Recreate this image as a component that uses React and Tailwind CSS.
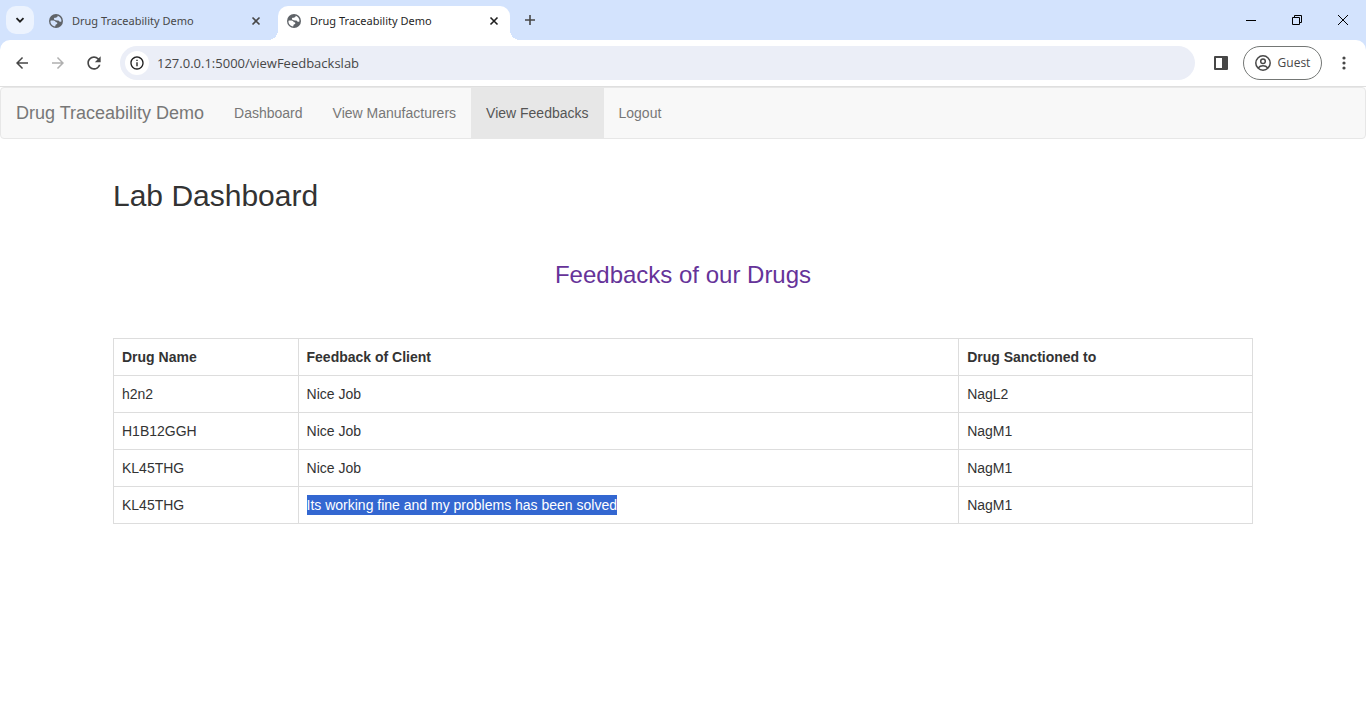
import { MdArrowBack, MdArrowForward, MdRefresh, MdInfoOutline } from "react-icons/md";

function Globe({ land }) {
  return (
    <svg viewBox="0 0 14 14" className="size-3.5 shrink-0" aria-hidden="true">
      <circle cx="7" cy="7" r="7" fill="#5f6368" />
      <path d="M1.500 6.700C3 6.500 5 6.600 6 7.100C6.600 7.400 6.300 8.100 7 8.200C7.900 8.300 8.500 8.600 8.300 9.400C8 10.200 7 10 6.600 10.800C6.400 11.400 6.500 12 6.100 12.500C3.200 12.100 1.100 9.500 1.500 6.700Z" fill={land} />
      <path d="M8.600 1.700C11 2.400 12.500 4.400 12.500 7.200C11.800 7.900 10.900 7.900 10.200 7.200C9.700 6.600 9 6.700 8 6.500C6.600 6.300 4.800 5.900 4.900 4.700C5 3.700 6.300 3.900 7.200 3.600C8.200 3.300 8.700 2.600 8.600 1.700Z" fill={land} />
    </svg>
  );
}

function Tab({ active }) {
  return (
    <div
      className={
        active
          ? "relative flex h-[34px] w-[232px] items-center rounded-t-[10px] bg-white pr-2 pb-1 pl-[9px] text-[#1f1f1f]"
          : "flex h-[34px] w-[238px] items-center pr-3.5 pb-1 pl-[9px] text-[#474747]"
      }
    >
      {active && (
        <>
          <span className="absolute bottom-0 -left-2.5 size-2.5 bg-[radial-gradient(circle_at_0_0,#d3e3fd_10px,#fff_10px)]" />
          <span className="absolute -right-2.5 bottom-0 size-2.5 bg-[radial-gradient(circle_at_100%_0,#d3e3fd_10px,#fff_10px)]" />
        </>
      )}
      <Globe land={active ? "#ffffff" : "#d3e3fd"} />
      <span className="ml-[9px] flex-1 font-['Noto_Sans',sans-serif] text-[11px] leading-4 whitespace-nowrap">Drug Traceability Demo</span>
      <button aria-label="Close tab" className="flex size-4 items-center justify-center">
        <svg viewBox="0 0 10 10" className="size-2.5" fill="none" stroke="currentColor" strokeWidth="1.600">
          <path d="M1.500 1.500l7 7M8.500 1.500l-7 7" />
        </svg>
      </button>
    </div>
  );
}

function BrowserChrome() {
  return (
    <header className="bg-[#d3e3fd] font-['Open_Sans',sans-serif]">
      <div className="flex h-10 items-end pl-1.5">
        <button aria-label="Search tabs" className="mb-1.5 flex size-7 items-center justify-center rounded-[10px] bg-[#ecf3fe]">
          <svg viewBox="0 0 10 10" className="size-2.5" fill="none" stroke="#1f1f1f" strokeWidth="1.800">
            <path d="M1.500 3.200L5 6.700L8.500 3.200" />
          </svg>
        </button>
        <div className="flex pl-1.5">
          <Tab />
          <Tab active />
        </div>
        <button aria-label="New tab" className="mb-3 ml-3 flex size-4 items-center justify-center">
          <svg viewBox="0 0 12 12" className="size-3" fill="none" stroke="#474747" strokeWidth="1.600">
            <path d="M6 1v10M1 6h10" />
          </svg>
        </button>
        <div className="mb-3.5 ml-auto flex">
          <button aria-label="Minimize" className="flex w-[46px] justify-center">
            <svg viewBox="0 0 12 12" className="size-3" fill="none" stroke="#000"><path d="M1 6.500h10" /></svg>
          </button>
          <button aria-label="Restore" className="flex w-[46px] justify-center">
            <svg viewBox="0 0 12 12" className="size-3" fill="none" stroke="#000"><path d="M1.500 3.500h7v7h-7zM3.500 3.500v-2h7v7h-2" /></svg>
          </button>
          <button aria-label="Close" className="flex w-[46px] justify-center">
            <svg viewBox="0 0 12 12" className="size-3" fill="none" stroke="#000"><path d="M1 1l10 10M11 1L1 11" /></svg>
          </button>
        </div>
      </div>
      <div className="flex h-[47px] items-center rounded-t-[10px] border-b border-[#dfdfdf] bg-white pr-3.5 pl-3">
        <button aria-label="Back"><MdArrowBack className="size-5 p-px text-[#474747]" /></button>
        <button aria-label="Forward" className="ml-4"><MdArrowForward className="size-5 p-px text-[#b0b0b0]" /></button>
        <button aria-label="Reload" className="ml-4"><MdRefresh className="size-5 text-[#474747]" /></button>
        <div className="ml-4 flex h-[34px] flex-1 items-center rounded-full bg-[#ebeef7] pl-[5px]">
          <button aria-label="Site information" className="flex size-6 items-center justify-center rounded-full bg-white">
            <MdInfoOutline className="size-4 text-[#1f1f1f]" />
          </button>
          <input
            aria-label="Address"
            defaultValue="127.0.0.1:5000/viewFeedbackslab"
            className="ml-2 flex-1 bg-transparent text-[13px] leading-5 text-[#474747] outline-none"
          />
        </div>
        <button aria-label="Side panel" className="ml-[18px]">
          <svg viewBox="0 0 16 16" className="size-4" aria-hidden="true">
            <path fill="#474747" fillRule="evenodd" d="M2 1h12a1 1 0 0 1 1 1v12a1 1 0 0 1-1 1H2a1 1 0 0 1-1-1V2a1 1 0 0 1 1-1zM3 3v10h6V3z" />
          </svg>
        </button>
        <button className="ml-3.5 flex h-[34px] w-[79px] items-center justify-center rounded-full border border-[#747775] text-xs text-[#474747]">
          <svg viewBox="0 0 16 16" className="mr-[7px] size-4" fill="none" stroke="#474747" strokeWidth="1.500" aria-hidden="true">
            <circle cx="8" cy="8" r="7.200" />
            <circle cx="8" cy="6.300" r="2.300" />
            <path d="M3.200 13c1.200-1.500 3-2.200 4.800-2.200s3.600.7 4.800 2.200" />
          </svg>
          Guest
        </button>
        <button aria-label="Menu" className="ml-3.5">
          <svg viewBox="0 0 16 16" className="size-4" fill="#474747">
            <circle cx="8" cy="3" r="1.600" />
            <circle cx="8" cy="8" r="1.600" />
            <circle cx="8" cy="13" r="1.600" />
          </svg>
        </button>
      </div>
    </header>
  );
}

const links = ["Dashboard", "View Manufacturers", "View Feedbacks", "Logout"];

const rows = [
  ["h2n2", "Nice Job", "NagL2"],
  ["H1B12GGH", "Nice Job", "NagM1"],
  ["KL45THG", "Nice Job", "NagM1"],
  ["KL45THG", "Its working fine and my problems has been solved", "NagM1"],
];

export default function App() {
  return (
    <div className="min-h-screen bg-white font-['Liberation_Sans',Arial,sans-serif] text-sm leading-5 text-[#333]">
      <BrowserChrome />
      <nav className="flex rounded border border-[#e7e7e7] bg-[#f8f8f8] text-[#777]">
        <a href="#" className="p-[15px] text-lg leading-5">Drug Traceability Demo</a>
        {links.map((label) => (
          <a
            key={label}
            href="#"
            className={label === "View Feedbacks" ? "bg-[#e7e7e7] p-[15px] text-[#555]" : "p-[15px]"}
          >
            {label}
          </a>
        ))}
      </nav>
      <main className="mx-auto max-w-[1170px] px-[15px] pt-10">
        <h2 className="text-3xl leading-[33px]">Lab Dashboard</h2>
        <h3 className="mt-[50px] text-center text-2xl leading-[26px] text-[#663399]">Feedbacks of our Drugs</h3>
        <table className="mt-[50px] w-full table-fixed border-collapse text-left">
          <thead>
            <tr>
              <th className="w-[16.2%] border border-[#ddd] p-2">Drug Name</th>
              <th className="border border-[#ddd] p-2">Feedback of Client</th>
              <th className="w-[25.8%] border border-[#ddd] p-2">Drug Sanctioned to</th>
            </tr>
          </thead>
          <tbody>
            {rows.map((row, i) => (
              <tr key={i}>
                {row.map((cell, j) => (
                  <td key={j} className="border border-[#ddd] p-2">
                    {i === 3 && j === 1 ? <mark className="inline-block bg-[#3367d1] text-white">{cell}</mark> : cell}
                  </td>
                ))}
              </tr>
            ))}
          </tbody>
        </table>
      </main>
    </div>
  );
}
